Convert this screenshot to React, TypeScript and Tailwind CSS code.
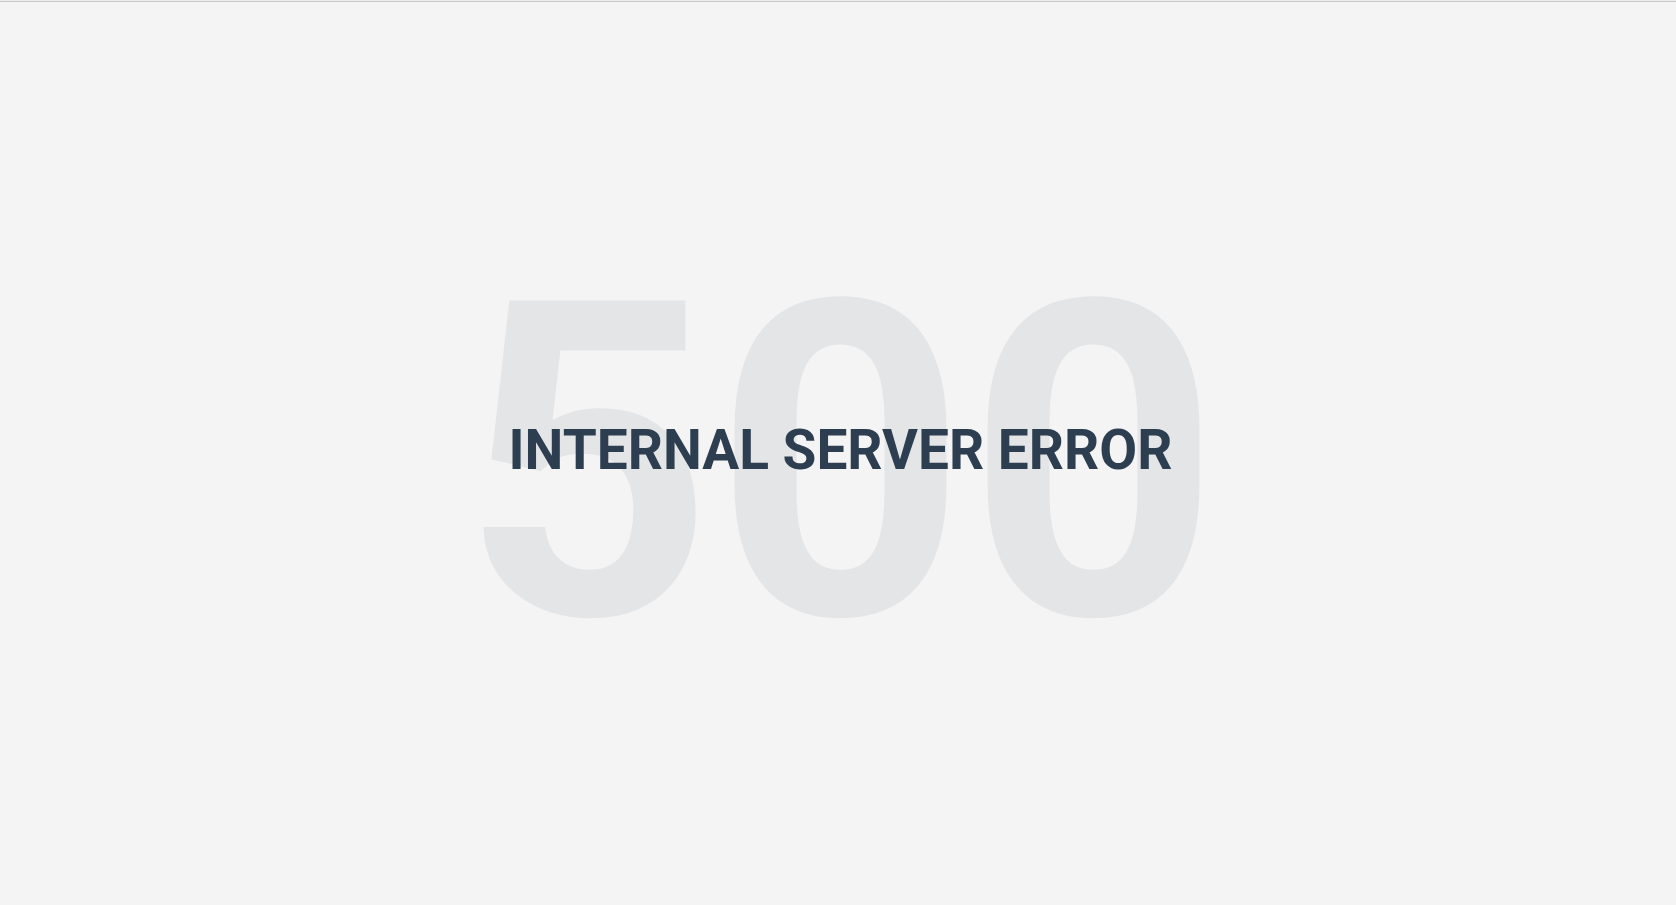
import React from "react";

export default function App() {
  return (
    <div className="min-h-screen w-full bg-[#f4f4f4] flex flex-col" style={{ fontFamily: "Roboto, 'Liberation Sans', sans-serif" }}>
      <div className="h-px bg-[#ececec]" />
      <div className="h-px bg-[#c9c9c9]" />
      <div className="flex-1 grid place-items-center pl-[5px]">
        <div className="grid place-items-center">
          <div className="[grid-area:1/1] mt-[20px] text-[441px] leading-none font-bold text-[#e4e5e7] select-none">500</div>
          <h1 className="[grid-area:1/1] mb-[6px] text-[55px] leading-none font-bold text-[#2c3e50] tracking-normal">INTERNAL SERVER ERROR</h1>
        </div>
      </div>
    </div>
  );
}
